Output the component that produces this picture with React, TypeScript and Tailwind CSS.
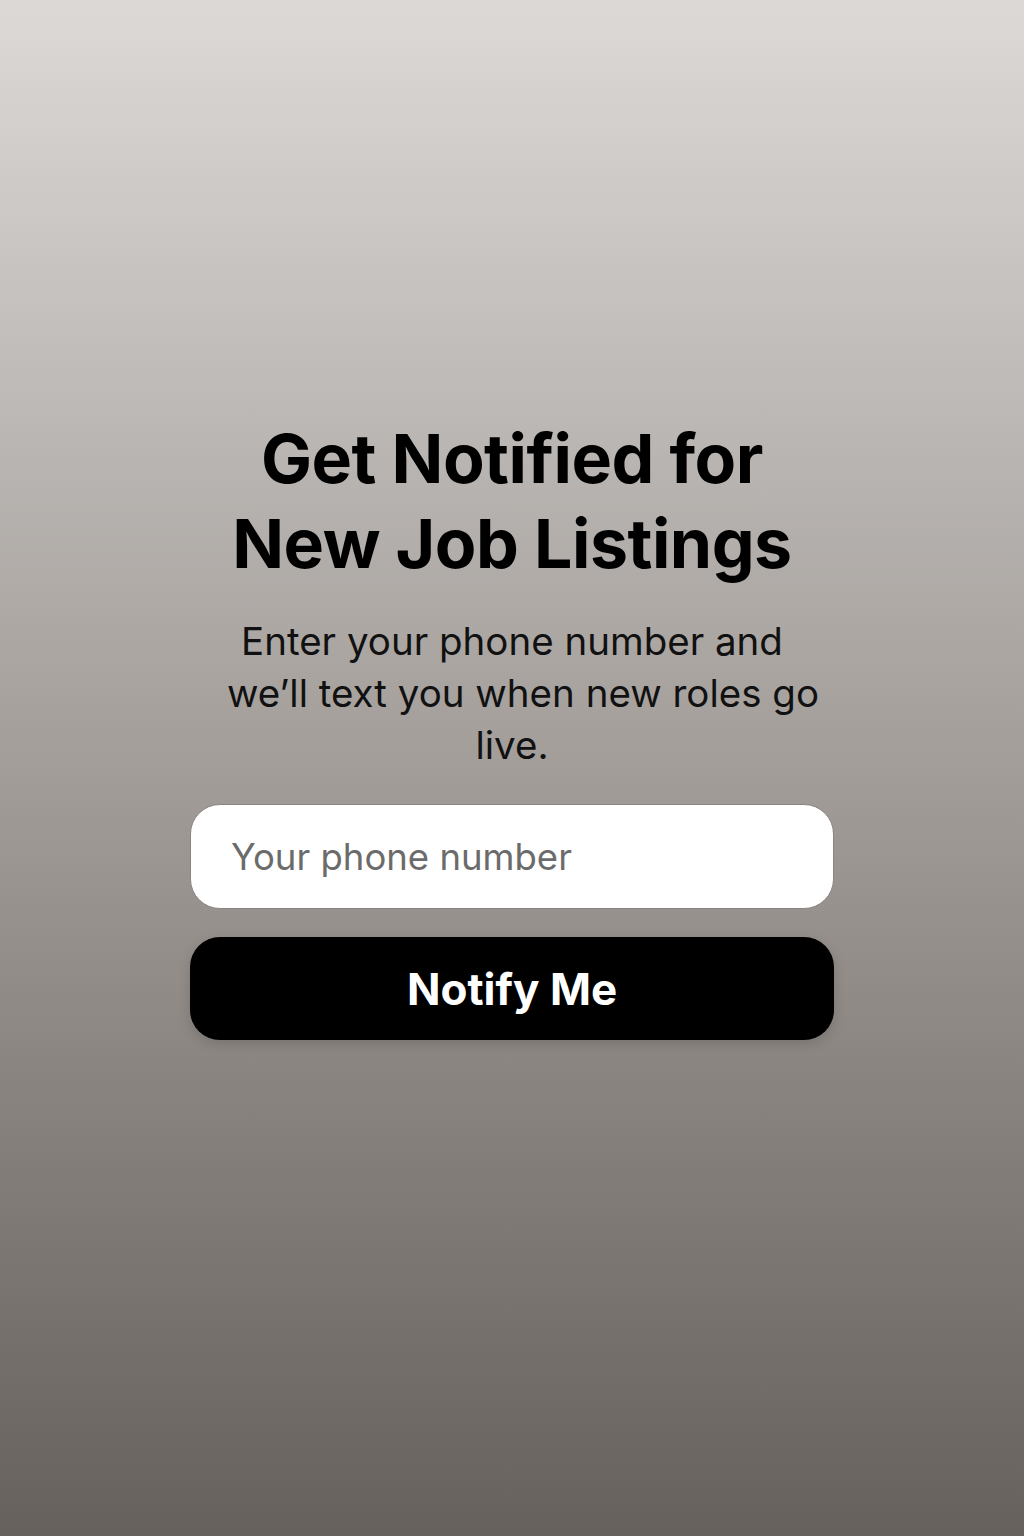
export default function App() {
  return (
    <div
      className="flex h-[1536px] w-full flex-col items-center bg-gradient-to-b from-[#dcd9d7] via-[#a29d99] to-[#67615e]"
      style={{ fontFamily: "Inter, 'Noto Sans', sans-serif" }}
    >
      <h1 className="mt-[416px] text-center text-[68px] font-bold leading-[85px] tracking-[-0.5px] text-black">
        Get Notified for
        <br />
        New Job Listings
      </h1>

      <p className="mt-[29px] text-center text-[38.5px] leading-[52px] text-[#111]">
        Enter your phone number and
        <br />
        <span className="pl-[22px]">we’ll text you when new roles go</span>
        <br />
        live.
      </p>

      <div className="mt-[33px] flex w-[644px] flex-col gap-[28px]">
        <input
          type="tel"
          placeholder="Your phone number"
          className="h-[105px] w-full rounded-[30px] border border-[#8a8582] bg-white px-[40px] text-[36.5px] text-black outline-none placeholder:text-[#6b6b6b]"
        />
        <button className="h-[103px] w-full rounded-[30px] bg-black text-[44px] font-bold text-white shadow-[0_4px_12px_rgba(0,0,0,0.15)]">
          Notify Me
        </button>
      </div>
    </div>
  );
}
